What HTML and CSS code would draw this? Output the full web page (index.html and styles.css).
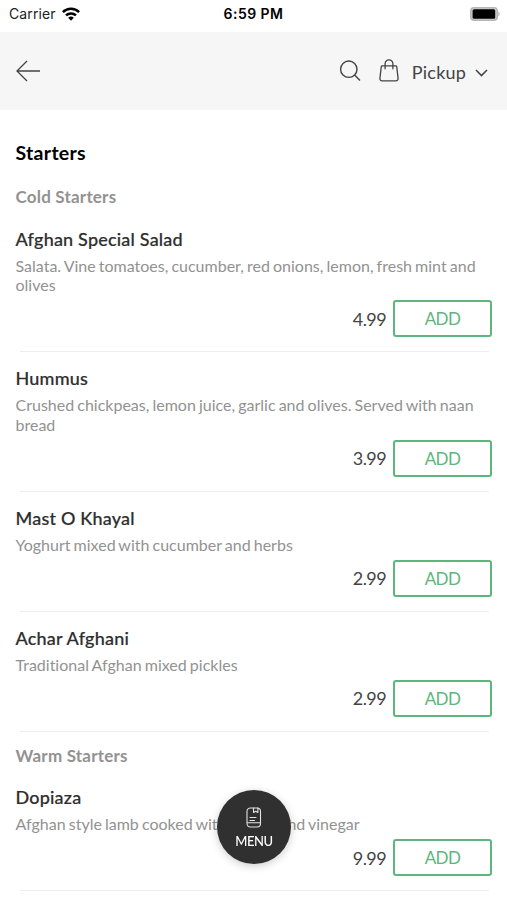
FILE: index.html
```html
<!DOCTYPE html>
<html lang="en">
<head>
<meta charset="utf-8">
<title>Starters</title>
<link rel="stylesheet" href="styles.css">
</head>
<body>
<div class="statusbar">
  <div class="carrier"><span class="carrier-name">Carrier</span>
    <svg width="18" height="14" viewBox="0 0 18 14" fill="none" stroke="#000" stroke-width="2.5"><path d="M.9 5.1a11.7 11.7 0 0 1 16.2 0M4 8.4a7.2 7.2 0 0 1 10 0"/><path d="M6.2 10.8a4 4 0 0 1 5.6 0L9 13.8z" fill="#000" stroke="none"/></svg>
  </div>
  <div class="time">6:59 PM</div>
  <svg class="battery" width="30" height="14" viewBox="0 0 30 14"><rect x=".8" y=".8" width="26.400" height="12.400" rx="3.2" fill="#ccc" stroke="#b8b8b8" stroke-width="1.600"/><rect x="2.600" y="2.2" width="22.6" height="9.6" rx="1.5"/><path d="M28.3 4.5q3 2.500 0 5z" fill="#b4b4b4"/></svg>
</div>
<header class="toolbar">
  <svg class="back" width="26" height="22" viewBox="0 0 26 22" fill="none" stroke="#444" stroke-width="1.3"><path d="M25 11H2M12 1 2 11l10 10"/></svg>
  <svg class="search" width="22" height="22" viewBox="0 0 22 22" fill="none" stroke="#444" stroke-width="1.4"><circle cx="9.800" cy="9.200" r="8.200"/><path d="m15.600 15 5.400 5.600"/></svg>
  <svg class="bag" width="20" height="23" viewBox="0 0 20 23" fill="none" stroke="#444" stroke-width="1.3" stroke-linejoin="round" stroke-linecap="round"><path d="M3.200 6.800h13.600q.8 0 .9.800l1.400 11.700q.2 2.500-2.300 2.500H3.200q-2.500 0-2.300-2.500L2.300 7.600q.1-.8.9-.8z"/><path d="M6.100 9.800V5a3.900 4.200 0 0 1 7.800 0v4.800"/></svg>
  <span class="mode">Pickup</span>
  <svg class="chevron" width="13" height="8" viewBox="0 0 13 8" fill="none" stroke="#444" stroke-width="1.5"><path d="m1 1 5.500 5.600L12 1"/></svg>
</header>
<main class="menu">
  <h1 class="title">Starters</h1>
  <h2 class="group">Cold Starters</h2>
  <article class="item">
    <h3 class="name">Afghan Special Salad</h3>
    <p class="desc">Salata. Vine tomatoes, cucumber, red onions, lemon, fresh mint and<br>olives</p>
    <div class="buy"><span class="price">4.99</span><button class="add">ADD</button></div>
  </article>
  <article class="item">
    <h3 class="name">Hummus</h3>
    <p class="desc">Crushed chickpeas, lemon juice, garlic and olives. Served with naan<br>bread</p>
    <div class="buy"><span class="price">3.99</span><button class="add">ADD</button></div>
  </article>
  <article class="item">
    <h3 class="name">Mast O Khayal</h3>
    <p class="desc">Yoghurt mixed with cucumber and herbs</p>
    <div class="buy"><span class="price">2.99</span><button class="add">ADD</button></div>
  </article>
  <article class="item">
    <h3 class="name">Achar Afghani</h3>
    <p class="desc">Traditional Afghan mixed pickles</p>
    <div class="buy"><span class="price">2.99</span><button class="add">ADD</button></div>
  </article>
  <h2 class="group warm">Warm Starters</h2>
  <article class="item">
    <h3 class="name">Dopiaza</h3>
    <p class="desc">Afghan style lamb cooked with onions and vinegar</p>
    <div class="buy"><span class="price">9.99</span><button class="add">ADD</button></div>
  </article>
</main>
<button class="fab">
  <svg width="16" height="21" viewBox="0 0 16 21" fill="none" stroke="#e4e4e4" stroke-width="1.100" stroke-linecap="round" stroke-linejoin="round"><rect x="1" y="1" width="13.500" height="19" rx="3.400"/><path d="M7.500 1v4.500l2.200-1.300 2.200 1.300V1M4 10.500h6M4 13.500h4.500M1.500 15.800h12.500"/></svg>
  <span>MENU</span>
</button>
</body>
</html>
```

FILE: styles.css
```css
* { box-sizing: border-box; margin: 0; }
body {
  height: 900px;
  overflow: hidden;
  background: #fff;
  color: #333;
  font-family: Lato, "Liberation Sans", sans-serif;
  font-variant-ligatures: none;
}
svg { display: block; flex: none; }
.statusbar {
  display: grid;
  grid-template-columns: 1fr auto 1fr;
  align-items: center;
  height: 32px;
  padding: 0 7px 5px 9px;
  color: #000;
  font-family: Inter, "Liberation Sans", sans-serif;
}
.carrier { display: flex; align-items: center; gap: 6px; font-size: 14px; color: #222; }
.carrier-name { letter-spacing: 0.1px; }
.time { margin-right: 2px; font-size: 14px; font-weight: 600; letter-spacing: 0.45px; }
.battery { justify-self: end; }
.toolbar {
  display: flex;
  align-items: center;
  height: 78px;
  padding: 0 19px 0 15px;
  background: #f6f6f6;
}
.search { margin-left: auto; }
.bag { margin: 0 12.5px 2px 18px; }
.mode { margin-top: 1px; font-size: 18px; letter-spacing: 0.2px; color: #444; }
.chevron { margin: 3px 0 0 9px; }
.menu { padding: 31px 15px 0; }
.title { padding-left: 0.5px; font-size: 19.5px; line-height: 24px; font-weight: 700; letter-spacing: 0.3px; color: #000; }
.group { padding-left: 0.5px; margin-top: 20px; font-size: 17px; line-height: 24px; font-weight: 700; letter-spacing: 0.2px; color: #929292; }
.group.warm { margin: 12px 0 3.5px; }
.item { position: relative; padding: 15px 0 14px; border-bottom: 1px solid transparent; }
.group:not(.warm) + .item { margin-top: 3.5px; }
.item::after {
  content: "";
  position: absolute;
  left: 5px;
  right: 3px;
  bottom: -1px;
  height: 1px;
  background: #eeeeee;
}
.name { padding-left: 0.5px; font-size: 18px; line-height: 22px; font-weight: 500; letter-spacing: 0.2px; color: #2e2e2e; -webkit-text-stroke: 0.2px #2e2e2e; }
.desc { padding-left: 0.5px; margin-top: 6px; font-size: 16px; line-height: 19.5px; word-spacing: -1px; color: #929292; white-space: nowrap; }
.buy { display: flex; justify-content: flex-end; align-items: center; gap: 7px; margin-top: 5.500px; }
.price { font-size: 18px; letter-spacing: -0.6px; color: #444; }
.add {
  width: 99px;
  height: 37px;
  padding: 0;
  border: 2px solid #5db67d;
  border-radius: 3px;
  background: #fff;
  color: #5db67d;
  font: 17px Lato, sans-serif;
  letter-spacing: -0.6px;
}
.fab {
  position: fixed;
  left: 217px;
  top: 790px;
  display: flex;
  flex-direction: column;
  align-items: center;
  gap: 5px;
  width: 74px;
  height: 74px;
  padding: 17px 0 0;
  border: 0;
  border-radius: 50%;
  background: #303030;
  color: #fff;
  font: 500 13px/16px Lato, sans-serif;
  letter-spacing: -0.4px;
  box-shadow: 0 2px 8px rgba(0, 0, 0, 0.2);
}
```
